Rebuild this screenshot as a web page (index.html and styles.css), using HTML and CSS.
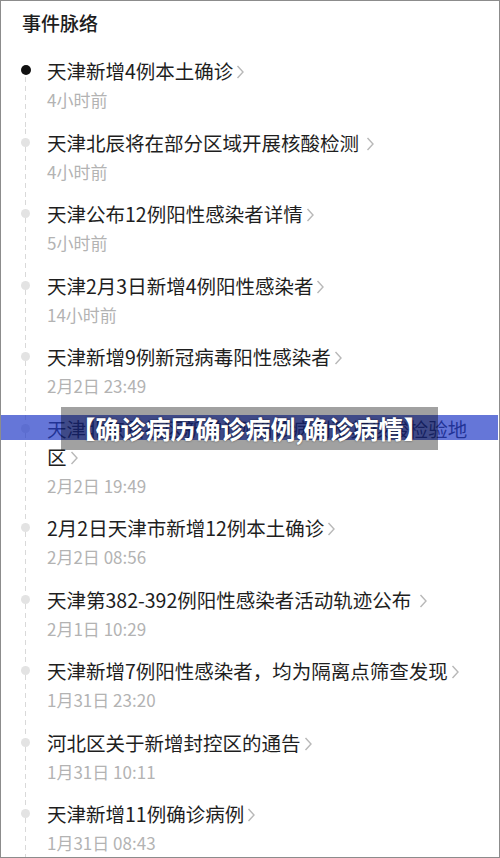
FILE: index.html
```html
<!DOCTYPE html>
<html lang="zh-CN">
<head>
	<meta charset="UTF-8">
	<title>事件脉络</title>
	<link rel="stylesheet" href="styles.css">
</head>
<body>
	<div class="page">
		<h2 class="head">事件脉络</h2>
		<ul class="timeline">
			<li class="event first">
				<span class="dot"></span>
				<a class="title">天津新增4例本土确诊<svg class="chev" viewBox="0 0 8 16"><polyline points="1.5,2 7,8 1.5,14"/></svg></a>
				<span class="time">4小时前</span>
			</li>
			<li class="event">
				<span class="dot"></span>
				<a class="title">天津北辰将在部分区域开展核酸检测 <svg class="chev" viewBox="0 0 8 16"><polyline points="1.5,2 7,8 1.5,14"/></svg></a>
				<span class="time">4小时前</span>
			</li>
			<li class="event">
				<span class="dot"></span>
				<a class="title">天津公布12例阳性感染者详情<svg class="chev" viewBox="0 0 8 16"><polyline points="1.5,2 7,8 1.5,14"/></svg></a>
				<span class="time">5小时前</span>
			</li>
			<li class="event">
				<span class="dot"></span>
				<a class="title">天津2月3日新增4例阳性感染者<svg class="chev" viewBox="0 0 8 16"><polyline points="1.5,2 7,8 1.5,14"/></svg></a>
				<span class="time">14小时前</span>
			</li>
			<li class="event">
				<span class="dot"></span>
				<a class="title">天津新增9例新冠病毒阳性感染者<svg class="chev" viewBox="0 0 8 16"><polyline points="1.5,2 7,8 1.5,14"/></svg></a>
				<span class="time">2月2日 23:49</span>
			</li>
			<li class="event">
				<span class="dot"></span>
				<a class="title">天津北京路社区新增1例确诊病例及其核酸检验地区<svg class="chev" viewBox="0 0 8 16"><polyline points="1.5,2 7,8 1.5,14"/></svg></a>
				<span class="time">2月2日 19:49</span>
			</li>
			<li class="event">
				<span class="dot"></span>
				<a class="title">2月2日天津市新增12例本土确诊<svg class="chev" viewBox="0 0 8 16"><polyline points="1.5,2 7,8 1.5,14"/></svg></a>
				<span class="time">2月2日 08:56</span>
			</li>
			<li class="event">
				<span class="dot"></span>
				<a class="title">天津第382-392例阳性感染者活动轨迹公布 <svg class="chev" viewBox="0 0 8 16"><polyline points="1.5,2 7,8 1.5,14"/></svg></a>
				<span class="time">2月1日 10:29</span>
			</li>
			<li class="event">
				<span class="dot"></span>
				<a class="title">天津新增7例阳性感染者，均为隔离点筛查发现<svg class="chev" viewBox="0 0 8 16"><polyline points="1.5,2 7,8 1.5,14"/></svg></a>
				<span class="time">1月31日 23:20</span>
			</li>
			<li class="event">
				<span class="dot"></span>
				<a class="title">河北区关于新增封控区的通告<svg class="chev" viewBox="0 0 8 16"><polyline points="1.5,2 7,8 1.5,14"/></svg></a>
				<span class="time">1月31日 10:11</span>
			</li>
			<li class="event">
				<span class="dot"></span>
				<a class="title">天津新增11例确诊病例<svg class="chev" viewBox="0 0 8 16"><polyline points="1.5,2 7,8 1.5,14"/></svg></a>
				<span class="time">1月31日 08:43</span>
			</li>
		</ul>

		<div class="band"></div>
		<div class="caption">【确诊病历确诊病例,确诊病情】</div>
	</div>
</body>
</html>
```

FILE: styles.css
```css
html, body{
	margin: 0;
	padding: 0;
	background: #fff;
}
.page{
	position: relative;
	width: 500px;
	height: 858px;
	box-sizing: border-box;
	border: 1px solid #8c8c8c;
	overflow: hidden;
	font-family: "Noto Sans CJK SC", "Noto Sans", sans-serif;
	color: #222;
}
.head{
	margin: 8px 0 20px 21px;
	font-size: 19px;
	line-height: 28px;
	font-weight: 500;
	color: #1e1e1e;
}
.timeline{
	list-style: none;
	margin: 0;
	padding: 0;
}
.event{
	display: grid;
	grid-template-columns: 46px 1fr;
	padding: 0 26px 16.5px 0;
	background-image: repeating-linear-gradient(to bottom, #d9d9d9 0, #d9d9d9 5px, transparent 5px, transparent 9px);
	background-repeat: no-repeat;
	background-size: 1px 100%;
	background-position: 24px 0;
}
.event.first{
	background-position: 24px 20px;
}
.dot{
	grid-column: 1;
	grid-row: 1;
	width: 9px;
	height: 9px;
	margin: 9px 0 0 20px;
	border-radius: 50%;
	background: #e3e3e3;
}
.first .dot{
	width: 10px;
	height: 10px;
	margin-top: 8px;
	background: #111;
}
.title{
	grid-column: 2;
	grid-row: 1;
	font-size: 19.5px;
	line-height: 28px;
	color: #1e1e1e;
}
.chev{
	width: 8px;
	height: 16px;
	margin-left: 3px;
	vertical-align: -1px;
	fill: none;
	stroke: #b8b8b8;
	stroke-width: 1.4;
}
.time{
	grid-column: 2;
	grid-row: 2;
	margin-top: 3px;
	font-size: 17px;
	line-height: 24px;
	color: #b3b3b3;
}
.band{
	position: absolute;
	left: 0;
	right: 1px;
	top: 414px;
	height: 25px;
	background: rgba(35, 60, 200, 0.7);
}
.caption{
	position: absolute;
	left: 60px;
	top: 406px;
	width: 377px;
	height: 43px;
	background: rgba(0, 0, 0, 0.37);
	color: #fff;
	font-size: 25px;
	font-weight: bold;
	line-height: 43px;
	text-align: center;
	white-space: nowrap;
	text-shadow: 0 0 2px rgba(0, 0, 0, 0.6);
}
```
